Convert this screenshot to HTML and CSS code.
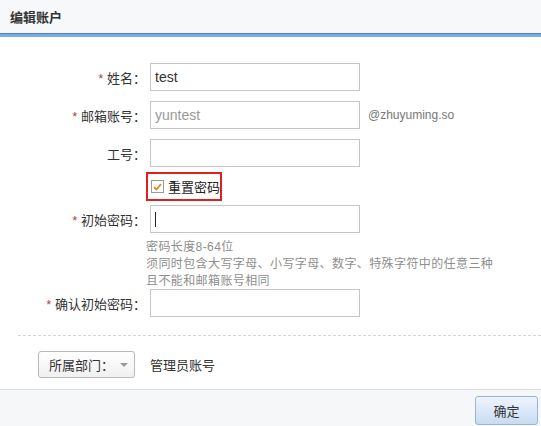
FILE: index.html
```html
<!DOCTYPE html>
<html lang="zh-CN">
<head>
    <meta charset="UTF-8">
    <meta name="viewport" content="width=device-width, initial-scale=1.0">
    <title>编辑账户</title>
    <link rel="stylesheet" href="styles.css">
</head>
<body>
    <div class="dialog">
        <header class="dialog-head">
            <h1>编辑账户</h1>
        </header>

        <div class="dialog-body">
            <div class="form-row">
                <label class="label"><span class="req">*</span> 姓名：</label>
                <input class="field" type="text" value="test">
            </div>
            <div class="form-row">
                <label class="label"><span class="req">*</span> 邮箱账号：</label>
                <input class="field field-muted" type="text" value="yuntest">
                <span class="suffix">@zhuyuming.so</span>
            </div>
            <div class="form-row">
                <label class="label">工号：</label>
                <input class="field" type="text" value="">
            </div>
            <div class="check-row">
                <label class="check-box">
                    <span class="check">
                        <svg width="9" height="8" viewBox="0 0 9 8"><path d="M1 4.2 L3.4 6.5 L8 1.2" fill="none" stroke="#e28a1c" stroke-width="1.8"/></svg>
                    </span>
                    <span>重置密码</span>
                </label>
            </div>
            <div class="form-row">
                <label class="label"><span class="req">*</span> 初始密码：</label>
                <div class="field"><span class="caret"></span></div>
            </div>
            <div class="hint">
                密码长度8-64位<br>
                须同时包含大写字母、小写字母、数字、特殊字符中的任意三种<br>
                且不能和邮箱账号相同
            </div>
            <div class="form-row">
                <label class="label"><span class="req">*</span> 确认初始密码：</label>
                <input class="field" type="password" value="">
            </div>

            <div class="divider"></div>

            <div class="dept-row">
                <button class="dept-btn">所属部门： <span class="arrow"></span></button>
                <span class="dept-name">管理员账号</span>
            </div>
        </div>

        <footer class="dialog-foot">
            <button class="ok-btn">确定</button>
        </footer>
    </div>
</body>
</html>
```

FILE: styles.css
```css
/* dialog de edição de conta */
body {
    margin: 0;
    padding: 0;
    background-color: #fff;
    color: #333;
    font-family: "Liberation Sans", "Noto Sans CJK SC", sans-serif;
    font-size: 13px;
}
.dialog {
    width: 541px;
    height: 426px;
    display: flex;
    flex-direction: column;
    overflow: hidden;
}
.dialog-head {
    height: 33px;
    background-color: #f7f8fa;
    border-bottom: 1px solid #4f84c4;
    box-shadow: 0 3px 0 #7baae0;
    display: flex;
    align-items: center;
    padding-left: 10px;
}
.dialog-head h1 {
    margin: 0;
    font-size: 13px;
    font-weight: bold;
    color: #333;
}
.dialog-body {
    flex: 1;
    padding-top: 29px;
}
.form-row {
    display: flex;
    align-items: center;
    height: 28px;
    margin-bottom: 10px;
}
.label {
    width: 146px;
    margin-right: 4px;
    text-align: right;
    color: #333;
    white-space: nowrap;
}
.req {
    color: #b0454f;
}
.field {
    box-sizing: border-box;
    width: 210px;
    height: 28px;
    margin: 0;
    padding: 0 4px;
    border: 1px solid #c6c6c6;
    background: #fff;
    font-family: "Liberation Sans", "Noto Sans CJK SC", sans-serif;
    font-size: 14px;
    color: #333;
    outline: none;
    display: flex;
    align-items: center;
}
.field-muted {
    color: #999;
}
.caret {
    display: block;
    width: 1px;
    height: 15px;
    background: #222;
}
.suffix {
    margin-left: 8px;
    color: #777;
    font-size: 12px;
}
.check-row {
    padding-left: 146px;
    margin-top: -5px;
    margin-bottom: 4px;
}
.check-box {
    box-sizing: border-box;
    width: 76px;
    height: 29px;
    border: 2px solid #e0201e;
    display: flex;
    align-items: center;
    gap: 4px;
    padding-left: 3px;
    font-size: 13px;
    color: #222;
    white-space: nowrap;
}
.check {
    box-sizing: border-box;
    flex: none;
    width: 13px;
    height: 13px;
    border: 1px solid #9a9a9a;
    background: #fff;
    display: flex;
    align-items: center;
    justify-content: center;
}
.hint {
    margin: -4px 0 -1px 146px;
    color: #8e8e8e;
    font-size: 12px;
    letter-spacing: 0.4px;
    line-height: 17px;
}
.divider {
    margin: 18px 0 0 18px;
    border-top: 1px dashed #d6d6d6;
}
.dept-row {
    display: flex;
    align-items: center;
    padding: 15px 0 0 38px;
}
.dept-btn {
    box-sizing: border-box;
    width: 97px;
    height: 27px;
    border: 1px solid #b9b9b9;
    border-radius: 3px;
    background: linear-gradient(#fff, #f0f0f0);
    font-family: "Liberation Sans", "Noto Sans CJK SC", sans-serif;
    font-size: 13px;
    color: #333;
    padding: 0 0 0 4px;
    display: flex;
    align-items: center;
    gap: 6px;
    justify-content: center;
}
.arrow {
    width: 0;
    height: 0;
    border-left: 4px solid transparent;
    border-right: 4px solid transparent;
    border-top: 4px solid #999;
}
.dept-name {
    margin-left: 15px;
}
.dialog-foot {
    height: 36px;
    border-top: 1px solid #d8dce2;
    background-color: #f6f7f9;
    display: flex;
    justify-content: flex-end;
    align-items: flex-end;
    padding-right: 3px;
}
.ok-btn {
    width: 63px;
    height: 29px;
    margin-bottom: 1px;
    border: 1px solid #9ab4d4;
    border-radius: 3px;
    background: linear-gradient(#eef4fc, #c9dcf3);
    font-family: "Liberation Sans", "Noto Sans CJK SC", sans-serif;
    font-size: 13px;
    color: #333;
    cursor: pointer;
}
```
